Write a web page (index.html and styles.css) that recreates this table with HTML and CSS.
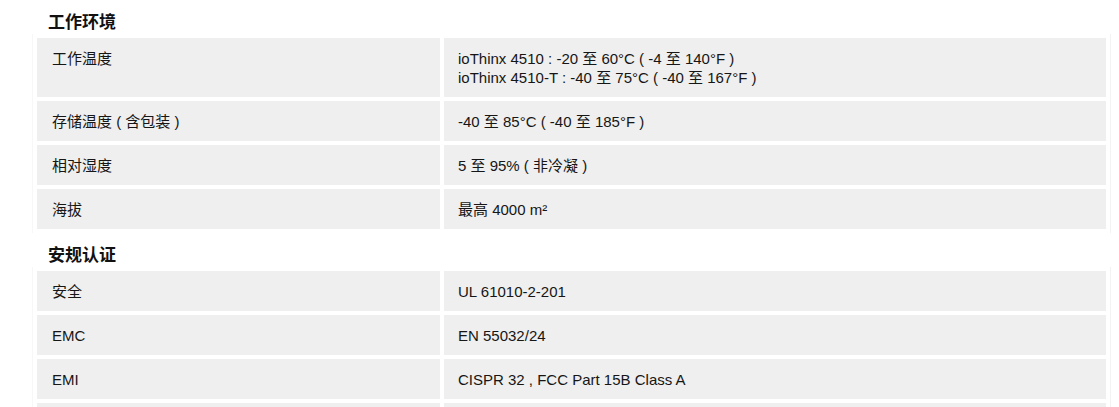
FILE: index.html
```html
<!DOCTYPE html>
<html lang="zh">
<head>
<meta charset="utf-8">
<link rel="stylesheet" href="styles.css">
</head>
<body>
<div class="page">
  <h2 class="sec-title">工作环境</h2>
  <table class="spec">
    <tr><td class="k">工作温度</td><td class="v">ioThinx 4510 : -20 至 60°C ( -4 至 140°F )<br>ioThinx 4510-T : -40 至 75°C ( -40 至 167°F )</td></tr>
    <tr><td class="k">存储温度 ( 含包装 )</td><td class="v">-40 至 85°C ( -40 至 185°F )</td></tr>
    <tr><td class="k">相对湿度</td><td class="v">5 至 95% ( 非冷凝 )</td></tr>
    <tr><td class="k">海拔</td><td class="v">最高 4000 m²</td></tr>
  </table>
  <h2 class="sec-title">安规认证</h2>
  <table class="spec">
    <tr><td class="k">安全</td><td class="v">UL 61010-2-201</td></tr>
    <tr><td class="k">EMC</td><td class="v">EN 55032/24</td></tr>
    <tr><td class="k">EMI</td><td class="v">CISPR 32 , FCC Part 15B Class A</td></tr>
    <tr><td class="k"></td><td class="v"></td></tr>
  </table>
</div>
</body>
</html>
```
FILE: styles.css
```css
html, body {
  margin: 0;
  padding: 0;
  background: #ffffff;
}
body {
  font-family: "Liberation Sans", "Noto Sans CJK SC", sans-serif;
  color: #161616;
}
.page {
  padding: 10px 0 0 33px;
  width: 1079px;
}
.sec-title {
  margin: 10px 0 0 15px;
  padding-top: 2px;
  font-size: 17px;
  line-height: 22px;
  font-weight: bold;
  color: #111;
}
.sec-title:first-child {
  margin-top: 0;
}
.spec {
  width: 1079px;
  border-collapse: separate;
  border-spacing: 4px;
  border-left: 1px solid #f7f7f7;
  border-right: 1px solid #f3f3f3;
  margin-left: -1px;
}
.spec td {
  background: #efefef;
  font-size: 15px;
  line-height: 19px;
  height: 19px;
  padding: 11px 14px 10px 14px;
  vertical-align: top;
}
.spec td.k {
  width: 374px;
  padding-left: 15px;
}
```
